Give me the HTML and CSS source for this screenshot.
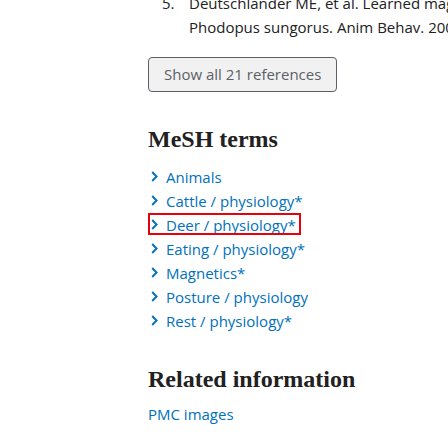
FILE: index.html
```html
<!DOCTYPE html>
<html lang="en">
<head>
<meta charset="utf-8">
<title>MeSH terms</title>
<link rel="stylesheet" href="styles.css">
</head>
<body>
<div class="page">
  <ol class="refs">
    <li class="ref">
      <span class="ref-num">5.</span>
      <span class="ref-text">
        <span class="ref-line">Deutschlander ME, et al. Learned magnetic compass orientation by the Siberian hamster,</span>
        <span class="ref-line">Phodopus sungorus. Anim Behav. 2003.</span>
      </span>
    </li>
  </ol>

  <button class="show-all" type="button">Show all 21 references</button>

  <section class="block mesh">
    <h2 class="heading">MeSH terms</h2>
    <ul class="terms">
      <li class="term"><a class="term-link" href="#"><svg class="chev" viewBox="0 0 7 11" width="7" height="11"><path d="M1.2 1 L5.6 5.5 L1.2 10" /></svg>Animals</a></li>
      <li class="term"><a class="term-link" href="#"><svg class="chev" viewBox="0 0 7 11" width="7" height="11"><path d="M1.2 1 L5.6 5.5 L1.2 10" /></svg>Cattle / physiology*</a></li>
      <li class="term"><a class="term-link selected" href="#"><svg class="chev" viewBox="0 0 7 11" width="7" height="11"><path d="M1.2 1 L5.6 5.5 L1.2 10" /></svg>Deer / physiology*</a></li>
      <li class="term"><a class="term-link" href="#"><svg class="chev" viewBox="0 0 7 11" width="7" height="11"><path d="M1.2 1 L5.6 5.5 L1.2 10" /></svg>Eating / physiology*</a></li>
      <li class="term"><a class="term-link" href="#"><svg class="chev" viewBox="0 0 7 11" width="7" height="11"><path d="M1.2 1 L5.6 5.5 L1.2 10" /></svg>Magnetics*</a></li>
      <li class="term"><a class="term-link" href="#"><svg class="chev" viewBox="0 0 7 11" width="7" height="11"><path d="M1.2 1 L5.6 5.5 L1.2 10" /></svg>Posture / physiology</a></li>
      <li class="term"><a class="term-link" href="#"><svg class="chev" viewBox="0 0 7 11" width="7" height="11"><path d="M1.2 1 L5.6 5.5 L1.2 10" /></svg>Rest / physiology*</a></li>
    </ul>
  </section>

  <section class="block related">
    <h2 class="heading">Related information</h2>
    <a class="plain-link" href="#">PMC images</a>
  </section>
</div>
</body>
</html>
```

FILE: styles.css
```css
html, body {
  margin: 0;
  padding: 0;
  background: #ffffff;
  overflow: hidden;
}

body {
  font-family: "Open Sans", "Noto Sans", sans-serif;
  font-size: 15px;
  line-height: 23.5px;
  color: #212121;
}

.page {
  margin-top: -7.6px;
  margin-left: 148px;
  width: 600px;
  display: flex;
  flex-direction: column;
  align-items: flex-start;
}

.refs {
  list-style: none;
  margin: 0;
  padding: 0;
}

.ref {
  display: flex;
}

.ref-num {
  width: 27px;
  padding-left: 14px;
  flex: none;
}

.ref-text {
  display: flex;
  flex-direction: column;
  white-space: nowrap;
}

.show-all {
  margin-top: 17.6px;
  height: 35px;
  box-sizing: border-box;
  padding: 0 15px;
  border: 1px solid #5c5f66;
  border-radius: 4px;
  background: #f1f1f1;
  color: #5b5f66;
  font-family: "Open Sans", "Noto Sans", sans-serif;
  font-size: 15px;
  line-height: 23.5px;
}

.heading {
  margin: 0;
  font-family: "Liberation Serif", "Times New Roman", serif;
  font-weight: bold;
  font-size: 24px;
  line-height: 28px;
  color: #212121;
}

.mesh {
  margin-top: 32.8px;
}

.terms {
  list-style: none;
  margin: 12.3px 0 0 0;
  padding: 0;
}

.term {
  height: 24px;
}

.term-link {
  display: inline-flex;
  align-items: center;
  box-sizing: border-box;
  height: 22px;
  padding: 2px 5px 0 3px;
  line-height: 20px;
  color: #0071bc;
  text-decoration: none;
}

.term-link.selected {
  outline: 2px solid #e8000b;
  outline-offset: -2px;
}

.chev {
  flex: none;
  margin-right: 8px;
  margin-top: -1px;
}

.chev path {
  fill: none;
  stroke: #0071bc;
  stroke-width: 1.9;
}

.related {
  margin-top: 31.7px;
}

.plain-link {
  display: block;
  margin-top: 10.3px;
  color: #0071bc;
  text-decoration: none;
}
```
